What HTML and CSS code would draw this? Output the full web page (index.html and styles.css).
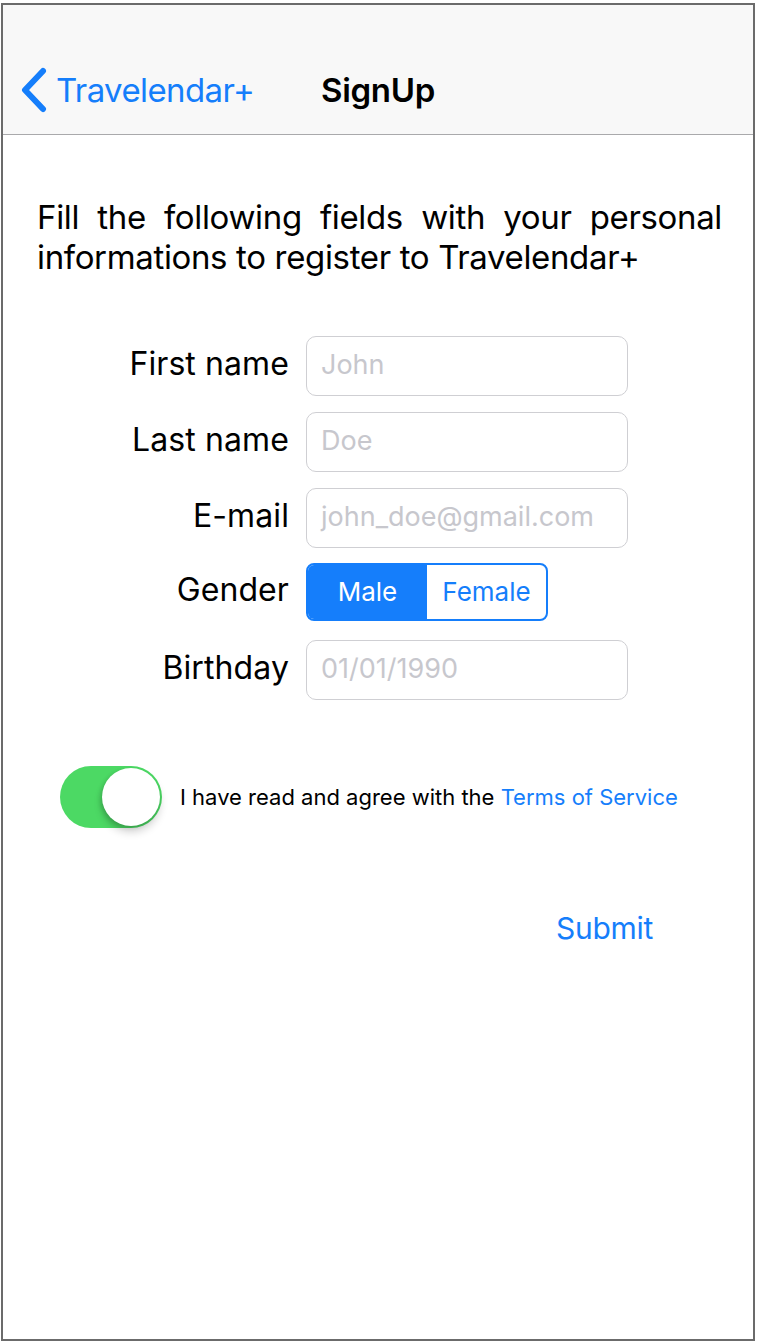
FILE: index.html
```html
<!DOCTYPE html>
<html lang="en">
<head>
<meta charset="utf-8">
<title>SignUp</title>
<link rel="stylesheet" href="styles.css">
</head>
<body>
<div class="phone">
  <header class="navbar">
    <div class="nav-row">
      <a class="back">
        <svg class="chev" width="28" height="46" viewBox="0 0 28 46" aria-hidden="true">
          <polyline points="23,4 5,23 23,42" fill="none" stroke="#157efb" stroke-width="6" stroke-linecap="round" stroke-linejoin="round"/>
        </svg>
        <span>Travelendar+</span>
      </a>
      <h1 class="title">SignUp</h1>
      <div class="spacer"></div>
    </div>
  </header>

  <main class="content">
    <p class="intro">Fill the following fields with your personal informations to register to Travelendar+</p>

    <form class="form">
      <div class="row">
        <label class="label">First name</label>
        <div class="field"><span class="ph">John</span></div>
      </div>
      <div class="row">
        <label class="label">Last name</label>
        <div class="field"><span class="ph">Doe</span></div>
      </div>
      <div class="row">
        <label class="label">E-mail</label>
        <div class="field"><span class="ph">john_doe@gmail.com</span></div>
      </div>
      <div class="row row-seg">
        <label class="label">Gender</label>
        <div class="segmented">
          <span class="seg seg-on">Male</span>
          <span class="seg">Female</span>
        </div>
      </div>
      <div class="row">
        <label class="label">Birthday</label>
        <div class="field"><span class="ph">01/01/1990</span></div>
      </div>
    </form>

    <div class="terms">
      <div class="switch"><div class="knob"></div></div>
      <p class="terms-text">I have read and agree with the <span class="link">Terms of Service</span></p>
    </div>

    <div class="submit-row">
      <span class="submit">Submit</span>
    </div>
  </main>
</div>
</body>
</html>
```

FILE: styles.css
```css
* { box-sizing: border-box; }

html, body {
  margin: 0;
  background: #ffffff;
}

body {
  padding: 3px 0 0 1px;
  font-family: "Inter", "Roboto", "Liberation Sans", sans-serif;
  color: #000;
}

.phone {
  width: 754px;
  height: 1338px;
  border: 2px solid #6b6b6b;
  background: #fff;
  display: flex;
  flex-direction: column;
  overflow: hidden;
}

.navbar {
  height: 130px;
  background: #f8f8f8;
  border-bottom: 1px solid #a9a9ab;
  padding-top: 41px;
}

.nav-row {
  height: 88px;
  display: grid;
  grid-template-columns: 1fr auto 1fr;
  align-items: center;
}

.back {
  display: flex;
  align-items: center;
  gap: 8px;
  padding-left: 17px;
  color: #157efb;
  font-size: 33px;
  letter-spacing: -0.6px;
}

.chev { display: block; }

.title {
  margin: 0;
  font-size: 33px;
  font-weight: 600;
  letter-spacing: -0.3px;
}

.content {
  flex: 1;
  display: flex;
  flex-direction: column;
}

.intro {
  margin: 62px 31px 0 34px;
  font-size: 33px;
  line-height: 40px;
  text-align: justify;
  letter-spacing: -0.35px;
}

.form {
  margin-top: 59px;
  display: flex;
  flex-direction: column;
  gap: 16px;
}

.row {
  display: flex;
  align-items: center;
  height: 60px;
}

.row-seg {
  margin-top: -2px;
  margin-bottom: 2px;
}

.label {
  width: 286px;
  text-align: right;
  font-size: 32px;
  letter-spacing: 0.1px;
  padding-bottom: 5px;
}

.field {
  margin-left: 17px;
  width: 322px;
  height: 60px;
  border: 1px solid #cfcfd3;
  border-radius: 10px;
  display: flex;
  align-items: center;
  padding-left: 14px;
  padding-bottom: 3px;
}

.ph {
  color: #c7c7cd;
  font-size: 27px;
  letter-spacing: 0;
}

.segmented {
  margin-left: 17px;
  width: 242px;
  height: 58px;
  border: 2px solid #157efb;
  border-radius: 8px;
  display: flex;
  overflow: hidden;
}

.seg {
  flex: 1;
  display: flex;
  align-items: center;
  justify-content: center;
  color: #157efb;
  font-size: 26px;
  letter-spacing: 0;
  padding-bottom: 2px;
}

.seg-on {
  background: #157efb;
  color: #fff;
}

.terms {
  margin-top: 66px;
  display: flex;
  align-items: center;
  padding-left: 57px;
}

.switch {
  width: 102px;
  height: 62px;
  border-radius: 31px;
  background: #4cd964;
  padding: 2px;
  display: flex;
  justify-content: flex-end;
  position: relative;
}

.knob {
  width: 58px;
  height: 58px;
  border-radius: 50%;
  background: #fff;
  box-shadow: 0 6px 8px rgba(0,0,0,0.18), -2px 2px 4px rgba(0,0,0,0.12);
}

.terms-text {
  margin: 0 0 0 18px;
  font-size: 22px;
  letter-spacing: 0;
}

.link { color: #157efb; }

.submit-row {
  margin-top: 82px;
  display: flex;
  justify-content: flex-end;
  padding-right: 100px;
}

.submit {
  color: #157efb;
  font-size: 30px;
  letter-spacing: -0.3px;
}
```
